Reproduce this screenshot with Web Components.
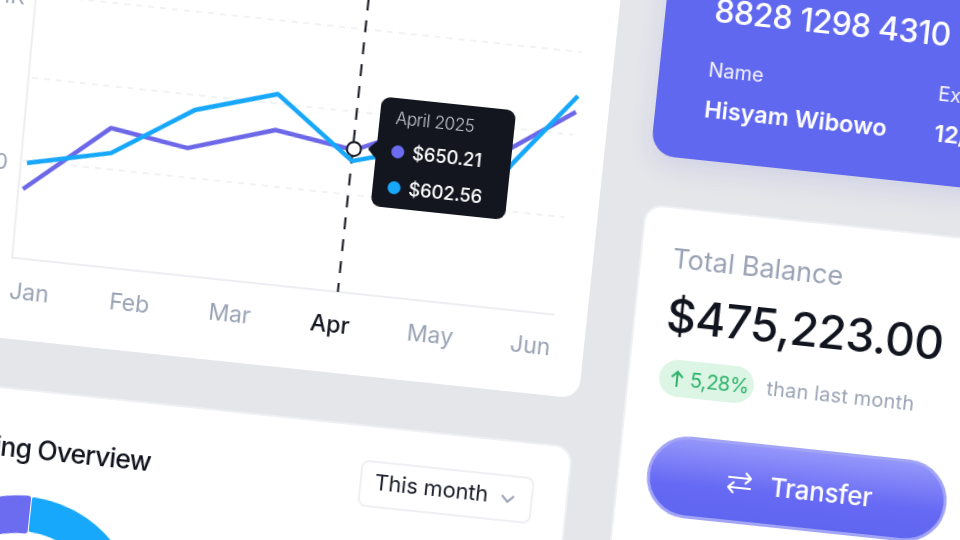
<!DOCTYPE html>
<html>
<head>
<meta charset="utf-8">
<style>
  html, body { margin: 0; height: 100%; overflow: hidden; background: #e5e6ea; }
  body { font-family: Inter, "Liberation Sans", sans-serif; }
</style>
</head>
<body>
<dash-board>
  <div slot="left">
    <flow-card></flow-card>
    <spend-card></spend-card>
  </div>
  <div slot="right">
    <bank-card></bank-card>
    <balance-card></balance-card>
  </div>
</dash-board>

<script>
const boardTemplate = document.createElement('template');
boardTemplate.innerHTML = `
  <style>
    :host {
      display: grid;
      grid-template-columns: 698px 359px;
      column-gap: 46px;
      width: 1105px;
      transform-origin: 0 0;
      transform: rotate(6deg) translate(-81px, -140px);
      filter: blur(0.4px);
    }
    ::slotted(div) {
      display: flex;
      flex-direction: column;
    }
    ::slotted([slot=left]) { gap: 48px; }
    ::slotted([slot=right]) { gap: 49px; }
  </style>
  <slot name="left"></slot>
  <slot name="right"></slot>
`;
class DashBoard extends HTMLElement {
  constructor() {
    super();
    this.attachShadow({ mode: 'open' }).appendChild(boardTemplate.content.cloneNode(true));
  }
}
customElements.define('dash-board', DashBoard);

const tipTemplate = document.createElement('template');
tipTemplate.innerHTML = `
  <style>
    :host {
      position: absolute;
      left: 438px;
      top: 86px;
      box-sizing: border-box;
      width: 135px;
      height: 110px;
      padding: 9px 0 0 15px;
      border-radius: 9px;
      background: #13161f;
      color: #fff;
    }
    .tip--arrow {
      position: absolute;
      left: -6px;
      top: 47px;
      width: 13px;
      height: 13px;
      background: #13161f;
      border-radius: 2px;
      transform: rotate(45deg);
    }
    .tip--title {
      margin-left: 1px;
      font-size: 17px;
      line-height: 22px;
      font-weight: 300;
      color: #c6c9d1;
      letter-spacing: -0.3px;
    }
    .tip--row {
      display: flex;
      align-items: center;
      gap: 8px;
      margin-top: 10px;
      font-size: 18.5px;
      line-height: 24px;
      font-weight: 500;
      letter-spacing: -0.2px;
    }
    .tip--row + .tip--row { margin-top: 12px; }
    .tip--dot { width: 13px; height: 13px; border-radius: 50%; }
  </style>
  <i class="tip--arrow"></i>
  <div class="tip--title"><slot name="title"></slot></div>
  <div class="tip--row"><i class="tip--dot" style="background:#6c6cf0"></i><slot name="a"></slot></div>
  <div class="tip--row"><i class="tip--dot" style="background:#18a8fb"></i><slot name="b"></slot></div>
`;
class ChartTip extends HTMLElement {
  constructor() {
    super();
    this.attachShadow({ mode: 'open' }).appendChild(tipTemplate.content.cloneNode(true));
  }
}
customElements.define('chart-tip', ChartTip);

const flowTemplate = document.createElement('template');
flowTemplate.innerHTML = `
  <style>
    :host {
      display: block;
      box-sizing: border-box;
      padding: 110px 33px 35px;
      background: #fff;
      border-radius: 18px;
    }
    .flow--plot {
      position: relative;
      height: 288px;
    }
    svg { display: block; overflow: visible; }
    .flow--ylabel {
      font-size: 22px;
      fill: #9aa3b5;
      text-anchor: end;
    }
    .flow--months {
      display: grid;
      grid-template-columns: repeat(6, 60px);
      column-gap: 40.8px;
      padding-left: 77.5px;
      margin-top: 17px;
      font-size: 23px;
      line-height: 26px;
      color: #9aa3b5;
      text-align: center;
    }
    .flow--months .on { color: #12151f; font-weight: 500; }
  </style>
  <div class="flow--plot">
    <svg width="632" height="288" viewBox="-48 -30 632 288" fill="none">
      <text class="flow--ylabel" x="25" y="2">$1K</text>
      <text class="flow--ylabel" x="25" y="168">$500</text>
      <g stroke="#eceef1" stroke-width="1.5" stroke-dasharray="6 6">
        <path d="M40 -9H584"/>
        <path d="M40 74H584"/>
        <path d="M40 157H584"/>
      </g>
      <path d="M35 -30L39 255H584" stroke="#edeef1" stroke-width="2"/>
      <path d="M366.5 -40V255" stroke="#12151f" stroke-width="2" stroke-dasharray="12 10"/>
      <path d="M42.6 185.6L123.8 115.7L202 127.6L287.6 100.5L367.7 112.2L440 80L495 117L525.6 92.6L584.5 51.2" stroke="#6c68e8" stroke-width="4.5" stroke-linejoin="round"/>
      <path d="M43.9 159.3L126.4 140.6L205.4 89L286.3 64.5L366.9 123.3L389.3 116.9L511.6 132.3L527.2 108.5L584.8 35.1" stroke="#18a8fb" stroke-width="4.5" stroke-linejoin="round"/>
      <circle cx="367.6" cy="111.2" r="7" fill="#fff" stroke="#12151f" stroke-width="2"/>
    </svg>
    <chart-tip>
      <span slot="title">April 2025</span>
      <span slot="a">$650.21</span>
      <span slot="b">$602.56</span>
    </chart-tip>
  </div>
  <div class="flow--months">
    <span>Jan</span><span>Feb</span><span>Mar</span><span class="on">Apr</span><span>May</span><span>Jun</span>
  </div>
`;
class FlowCard extends HTMLElement {
  constructor() {
    super();
    this.attachShadow({ mode: 'open' }).appendChild(flowTemplate.content.cloneNode(true));
  }
}
customElements.define('flow-card', FlowCard);

const spendTemplate = document.createElement('template');
spendTemplate.innerHTML = `
  <style>
    :host {
      display: block;
      box-sizing: border-box;
      height: 420px;
      padding: 33px 33px 0;
      background: #fff;
      border: 2px solid #eff0f3;
      border-radius: 18px;
    }
    .spend--head {
      display: flex;
      justify-content: space-between;
      align-items: flex-start;
    }
    .spend--title {
      margin: 6px 0 0 10px;
      font-size: 26.5px;
      line-height: 36px;
      font-weight: 500;
      letter-spacing: -0.8px;
      color: #12151f;
    }
    .spend--select {
      display: flex;
      align-items: center;
      box-sizing: border-box;
      width: 174px;
      height: 47px;
      padding: 0 14px 6px 13px;
      justify-content: space-between;
      border: 2px solid #eff0f3;
      border-radius: 8px;
      font-size: 22px;
      letter-spacing: -0.2px;
      color: #1a1d29;
    }
    .spend--chevron { display: block; margin: 6px 1px 0 0; }
    .spend--donut { display: block; margin: 23px 0 0 4px; }
  </style>
  <div class="spend--head">
    <h2 class="spend--title">Spending Overview</h2>
    <div class="spend--select">This month
      <svg class="spend--chevron" width="16" height="10" viewBox="0 0 16 10" fill="none"><path d="M2 2l6 6 6-6" stroke="#9aa3b5" stroke-width="2.2"/></svg>
    </div>
  </div>
  <svg class="spend--donut" width="248" height="248" viewBox="-124 -124 248 248">
    <path d="M-2 -120A120 120 0 0 0 -118 -20L-88 -20A88 88 0 0 1 -2 -88Z" fill="#6c6cf0" stroke="#6c6cf0" stroke-width="6" stroke-linejoin="round"/>
    <path d="M4 -120A120 120 0 0 1 108 50L81 36A89 89 0 0 0 4 -89Z" fill="#18a8fb" stroke="#18a8fb" stroke-width="4" stroke-linejoin="round"/>
  </svg>
`;
class SpendCard extends HTMLElement {
  constructor() {
    super();
    this.attachShadow({ mode: 'open' }).appendChild(spendTemplate.content.cloneNode(true));
  }
}
customElements.define('spend-card', SpendCard);

const bankTemplate = document.createElement('template');
bankTemplate.innerHTML = `
  <style>
    :host {
      display: block;
      box-sizing: border-box;
      height: 226px;
      padding: 56px 0 0 49px;
      background: #6068f0;
      border-radius: 24px;
      color: #fff;
      box-shadow: 0 10px 24px rgba(90, 96, 200, 0.14);
    }
    .bank--number {
      font-size: 32px;
      line-height: 40px;
      font-weight: 500;
      letter-spacing: -0.6px;
      white-space: nowrap;
    }
    .bank--row {
      display: grid;
      grid-template-columns: 231px 90px;
      margin-top: 27px;
    }
    .bank--label {
      font-size: 20px;
      line-height: 24px;
      font-weight: 400;
      opacity: 0.92;
    }
    .bank--value {
      margin-top: 15px;
      font-size: 23.5px;
      line-height: 26px;
      font-weight: 600;
      white-space: nowrap;
    }
  </style>
  <div class="bank--number">8828 1298 4310 1</div>
  <div class="bank--row">
    <div>
      <div class="bank--label">Name</div>
      <div class="bank--value">Hisyam Wibowo</div>
    </div>
    <div>
      <div class="bank--label">Exp</div>
      <div class="bank--value">12/26</div>
    </div>
  </div>
`;
class BankCard extends HTMLElement {
  constructor() {
    super();
    this.attachShadow({ mode: 'open' }).appendChild(bankTemplate.content.cloneNode(true));
  }
}
customElements.define('bank-card', BankCard);

const balanceTemplate = document.createElement('template');
balanceTemplate.innerHTML = `
  <style>
    :host {
      display: block;
      box-sizing: border-box;
      height: 360px;
      padding: 33px 29px 0;
      background: #fff;
      border: 2px solid #eff0f3;
      border-radius: 18px;
    }
    .bal--label {
      margin-left: 2px;
      font-size: 27px;
      line-height: 34px;
      font-weight: 400;
      color: #9aa3b5;
    }
    .bal--amount {
      margin: 12px 0 0 2px;
      font-size: 46px;
      line-height: 54px;
      font-weight: 500;
      letter-spacing: -0.5px;
      color: #12151f;
    }
    .bal--trend {
      display: flex;
      align-items: center;
      gap: 13px;
      margin: 17px 0 0 1px;
      font-size: 20px;
      color: #9aa3b5;
      letter-spacing: 0.2px;
    }
    .bal--pill {
      display: flex;
      align-items: center;
      gap: 6px;
      box-sizing: border-box;
      width: 95px;
      height: 37px;
      padding-left: 11px;
      border-radius: 19px;
      background: #dcf5e5;
      color: #2eb36a;
      letter-spacing: -0.5px;
    }
    .bal--btn {
      display: flex;
      align-items: center;
      justify-content: center;
      gap: 18px;
      box-sizing: border-box;
      width: 301px;
      height: 82px;
      margin: 38px 0 0 -1px;
      padding-left: 5px;
      border: 3px solid #a2a4f6;
      border-radius: 41px;
      background: linear-gradient(#9496fb, #6669f3 60%, #5f66f0);
      color: #fff;
      font-size: 26px;
      font-weight: 500;
      letter-spacing: -0.2px;
    }
  </style>
  <div class="bal--label">Total Balance</div>
  <div class="bal--amount">$475,223.00</div>
  <div class="bal--trend">
    <span class="bal--pill">
      <svg width="14" height="18" viewBox="0 0 14 18" fill="none"><path d="M7 17V2M1.5 7.5L7 2l5.5 5.5" stroke="#2eb36a" stroke-width="2"/></svg>
      5,28%
    </span>
    than last month
  </div>
  <div class="bal--btn">
    <svg width="26" height="24" viewBox="0 0 26 24" fill="none" stroke="#fff" stroke-width="2.2" stroke-linecap="round" stroke-linejoin="round"><path d="M2 7H24M19 2l5 5-5 5"/><path d="M24 17H2M7 12l-5 5 5 5"/></svg>
    Transfer
  </div>
`;
class BalanceCard extends HTMLElement {
  constructor() {
    super();
    this.attachShadow({ mode: 'open' }).appendChild(balanceTemplate.content.cloneNode(true));
  }
}
customElements.define('balance-card', BalanceCard);
</script>
</body>
</html>
